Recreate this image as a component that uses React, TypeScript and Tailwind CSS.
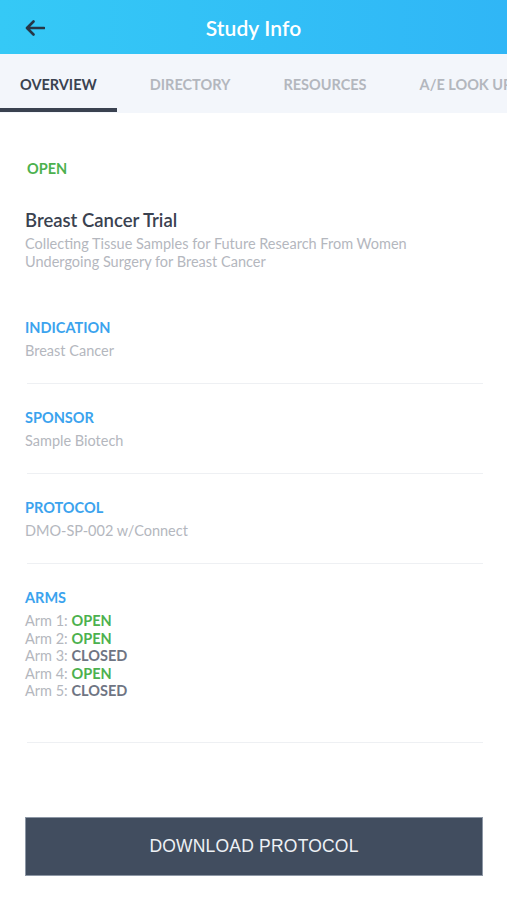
import React from "react";

const Divider = () => <div className="ml-[2px] h-px bg-[#eef0f3]" />;

function Field({ label, value }: { label: string; value: string }) {
  return (
    <div className="pt-[25px] pb-[23px]">
      <div className="text-[14.5px] leading-[18px] font-bold text-[#3ba3ee]">{label}</div>
      <div className="mt-[5px] text-[14.5px] leading-[18px] text-[#b4b7be]">{value}</div>
    </div>
  );
}

export default function App() {
  const tabs = ["OVERVIEW", "DIRECTORY", "RESOURCES", "A/E LOOK UP"];
  const arms: [string, boolean][] = [
    ["Arm 1:", true],
    ["Arm 2:", true],
    ["Arm 3:", false],
    ["Arm 4:", true],
    ["Arm 5:", false],
  ];
  return (
    <div className="w-[507px] h-[900px] bg-white overflow-hidden flex flex-col" style={{ fontFamily: "Lato, 'Noto Sans', sans-serif" }}>
      <header className="relative h-[54px] shrink-0 bg-gradient-to-r from-[#35c9f6] to-[#30b6f6] flex items-center justify-center">
        <svg className="absolute left-[25px] top-[20px]" width="20" height="16" viewBox="0 0 20 16" fill="none">
          <path d="M19 8H2.5M8.5 1.5L2 8l6.5 6.5" stroke="#263646" strokeWidth="2.6" strokeLinecap="round" strokeLinejoin="round" />
        </svg>
        <h1 className="text-white text-[21px] font-semibold leading-none tracking-[0.1px]">Study Info</h1>
      </header>
      <nav className="h-[59px] shrink-0 bg-[#f3f6fb] flex gap-[13px] whitespace-nowrap overflow-hidden">
        {tabs.map((t, i) => (
          <div key={t} className={`relative px-5 flex items-center text-[14.5px] font-bold ${i === 0 ? "text-[#3a4250]" : "text-[#b3b7be]"}`}>
            <span className="mt-[3px]">{t}</span>
            {i === 0 && <div className="absolute left-0 right-0 bottom-[1px] h-[4px] bg-[#3a4250]" />}
          </div>
        ))}
      </nav>
      <main className="flex-1 flex flex-col pl-[25px] pr-[24px]">
        <div className="mt-[47px] pl-[2px] text-[14.5px] leading-[18px] font-bold text-[#4cb14e]">OPEN</div>
        <div className="mt-[30px] text-[18.5px] leading-[24px] font-semibold text-[#3a4250]">Breast Cancer Trial</div>
        <div className="mt-[3px] text-[14.5px] leading-[18px] text-[#b4b7be] pr-[50px]">
          Collecting Tissue Samples for Future Research From Women Undergoing Surgery for Breast Cancer
        </div>
        <div className="mt-[23px]" />
        <Field label="INDICATION" value="Breast Cancer" />
        <Divider />
        <Field label="SPONSOR" value="Sample Biotech" />
        <Divider />
        <Field label="PROTOCOL" value="DMO-SP-002 w/Connect" />
        <Divider />
        <div className="pt-[25px] pb-[42px]">
          <div className="text-[14.5px] leading-[18px] font-bold text-[#3ba3ee]">ARMS</div>
          <div className="mt-[5px] flex flex-col">
            {arms.map(([a, open]) => (
              <div key={a} className="text-[14.5px] leading-[17.5px] text-[#b4b7be]">
                {a}{" "}
                <span className={`font-bold ${open ? "text-[#4cb14e]" : "text-[#6f7583]"}`}>{open ? "OPEN" : "CLOSED"}</span>
              </div>
            ))}
          </div>
        </div>
        <Divider />
        <button
          className="mt-[74px] h-[59px] w-full bg-[#414d5f] border border-[#8d97a5] text-[#eef1f5] text-[17.5px] tracking-[0.2px]"
          style={{ fontFamily: "'Liberation Sans', Arial, sans-serif" }}
        >
          DOWNLOAD PROTOCOL
        </button>
      </main>
    </div>
  );
}
